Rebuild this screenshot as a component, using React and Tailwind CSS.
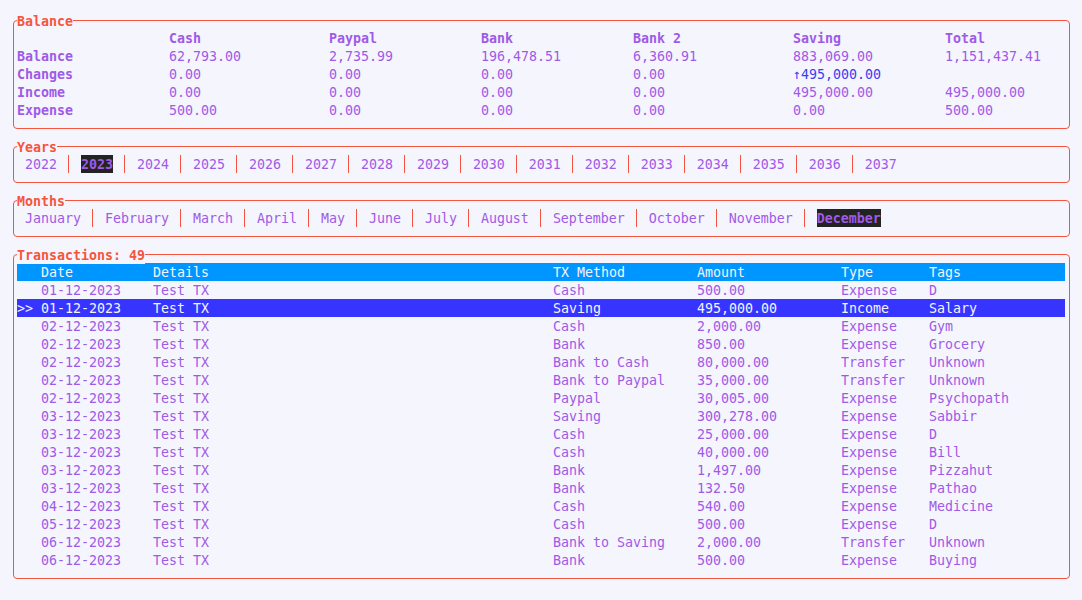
import React from "react";

const FONT = { fontFamily: '"DejaVu Sans Mono", "Liberation Mono", monospace' };

function Box({ title, children, className = "" }) {
  return (
    <div
      className={
        "relative ml-[13px] w-[1057px] rounded-[4px] border border-[#f5553c] pt-[8px] pb-[9px] pl-[3px] pr-[4px] " +
        className
      }
    >
      <div className="absolute left-[3px] top-[-9px] h-[18px] bg-[#f5f5fe] font-bold leading-[20px] text-[#f5553c]">
        {title}
      </div>
      {children}
    </div>
  );
}

const balCols = ["w-[152px]", "w-[160px]", "w-[152px]", "w-[152px]", "w-[160px]", "w-[152px]", "flex-1"];

function BalRow({ cells, bold }) {
  return (
    <div className="flex h-[18px] leading-[20px]">
      {cells.map((c, i) => (
        <div
          key={i}
          className={
            balCols[i] +
            " shrink-0 whitespace-pre " +
            (bold || i === 0 ? "font-bold " : "") +
            (c && c.blue ? "text-[#3c3cf5]" : "")
          }
        >
          {c && c.blue ? c.text : c}
        </div>
      ))}
    </div>
  );
}

function Sep() {
  return (
    <div className="flex h-[18px] w-[8px] shrink-0 justify-center">
      <div className="h-[18px] w-px bg-[#f5553c]" />
    </div>
  );
}

function Tabs({ items, active }) {
  return (
    <div className="flex h-[18px]">
      {items.map((it, i) => (
        <React.Fragment key={it}>
          {i > 0 && <Sep />}
          <div className="flex h-[18px] shrink-0 whitespace-pre px-[8px]">
            <span
              className={
                "h-[18px] leading-[20px] " + (it === active ? "bg-[#232323] font-bold" : "")
              }
            >
              {it}
            </span>
          </div>
        </React.Fragment>
      ))}
    </div>
  );
}

const txCols = ["w-[24px]", "w-[112px]", "w-[400px]", "w-[144px]", "w-[144px]", "w-[88px]", "flex-1"];

const txs = [
  ["01-12-2023", "Test TX", "Cash", "500.00", "Expense", "D"],
  ["01-12-2023", "Test TX", "Saving", "495,000.00", "Income", "Salary"],
  ["02-12-2023", "Test TX", "Cash", "2,000.00", "Expense", "Gym"],
  ["02-12-2023", "Test TX", "Bank", "850.00", "Expense", "Grocery"],
  ["02-12-2023", "Test TX", "Bank to Cash", "80,000.00", "Transfer", "Unknown"],
  ["02-12-2023", "Test TX", "Bank to Paypal", "35,000.00", "Transfer", "Unknown"],
  ["02-12-2023", "Test TX", "Paypal", "30,005.00", "Expense", "Psychopath"],
  ["03-12-2023", "Test TX", "Saving", "300,278.00", "Expense", "Sabbir"],
  ["03-12-2023", "Test TX", "Cash", "25,000.00", "Expense", "D"],
  ["03-12-2023", "Test TX", "Cash", "40,000.00", "Expense", "Bill"],
  ["03-12-2023", "Test TX", "Bank", "1,497.00", "Expense", "Pizzahut"],
  ["03-12-2023", "Test TX", "Bank", "132.50", "Expense", "Pathao"],
  ["04-12-2023", "Test TX", "Cash", "540.00", "Expense", "Medicine"],
  ["05-12-2023", "Test TX", "Cash", "500.00", "Expense", "D"],
  ["06-12-2023", "Test TX", "Bank to Saving", "2,000.00", "Transfer", "Unknown"],
  ["06-12-2023", "Test TX", "Bank", "500.00", "Expense", "Buying"],
];

function TxRow({ cells, className = "" }) {
  return (
    <div className={"flex h-[18px] leading-[20px] " + className}>
      {cells.map((c, i) => (
        <div key={i} className={txCols[i] + " h-[18px] shrink-0 whitespace-pre"}>
          {c}
        </div>
      ))}
    </div>
  );
}

export default function App() {
  const years = [];
  for (let y = 2022; y <= 2037; y++) years.push(String(y));
  const months = [
    "January", "February", "March", "April", "May", "June",
    "July", "August", "September", "October", "November", "December",
  ];
  return (
    <div
      className="min-h-[600px] w-[1082px] bg-[#f5f5fe] pt-[20px] text-[13.29px] text-[#9f5ae6]"
      style={FONT}
    >
      <Box title="Balance">
        <BalRow cells={["", "Cash", "Paypal", "Bank", "Bank 2", "Saving", "Total"]} bold />
        <BalRow cells={["Balance", "62,793.00", "2,735.99", "196,478.51", "6,360.91", "883,069.00", "1,151,437.41"]} />
        <BalRow cells={["Changes", "0.00", "0.00", "0.00", "0.00", { blue: true, text: "↑495,000.00" }, ""]} />
        <BalRow cells={["Income", "0.00", "0.00", "0.00", "0.00", "495,000.00", "495,000.00"]} />
        <BalRow cells={["Expense", "500.00", "0.00", "0.00", "0.00", "0.00", "500.00"]} />
      </Box>
      <Box title="Years" className="mt-[17px]">
        <Tabs items={years} active="2023" />
      </Box>
      <Box title="Months" className="mt-[17px]">
        <Tabs items={months} active="December" />
      </Box>
      <Box title="Transactions: 49" className="mt-[17px]">
        <TxRow
          cells={["", "Date", "Details", "TX Method", "Amount", "Type", "Tags"]}
          className="bg-[#0096ff] text-[#f4f4ff]"
        />
        {txs.map((t, i) => (
          <TxRow
            key={i}
            cells={[i === 1 ? ">>" : "", ...t]}
            className={i === 1 ? "bg-[#3535ff] text-[#f4f4ff]" : ""}
          />
        ))}
      </Box>
    </div>
  );
}
